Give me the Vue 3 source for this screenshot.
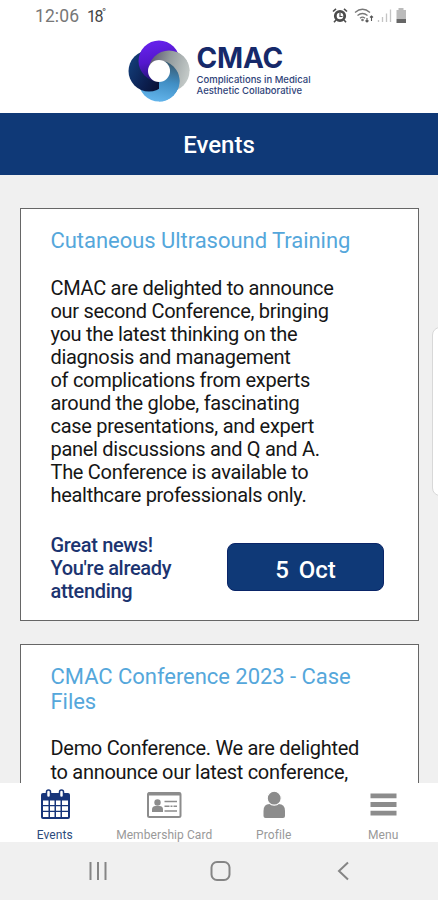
<template>
  <div class="phone">
    <!-- status bar -->
    <div class="status-bar">
      <span class="clock">12:06</span>
      <span class="temperature">18<sup>°</sup></span>
      <svg class="status-icons" width="76" height="18" viewBox="0 0 76 18">
        <!-- alarm -->
        <g fill="none" stroke="#4c4c4c">
          <circle cx="8" cy="9" r="4.7" stroke-width="2.8" />
          <path d="M8 6v3.5h2.5" stroke-width="1.2" />
          <path d="M1 4.5l3-2.7M15 4.5l-3-2.7M4 13l-2 2.3M12 13l2 2.3" stroke-width="1.6" />
        </g>
        <!-- wifi -->
        <g fill="none" stroke="#777" stroke-width="1.3">
          <path d="M23 5.500q7.500-6.500 15 0M25.500 8.500q5-4 10 0M28 11.200q2.500-2 5 0" />
          <path d="M35 11v4M33.500 13.500l1.500 1.500 1.500-1.500M39.500 14v-5M38 10.500l1.500-1.500 1.500 1.500" stroke="#555" stroke-width="1.1" />
          <circle cx="30.500" cy="13" r=".7" />
        </g>
        <!-- signal -->
        <path d="M46.500 15v-2M50.500 15V10M54.500 15V6.500M58.500 15V2.500" stroke="#c4c4c4" stroke-width="1.3" />
        <!-- battery -->
        <path d="M66.500 1h5v2h2.500v9H64.500V3h2z" fill="#bbb" />
        <path d="M64.500 12h9.500v4h-9.500z" fill="#666" />
      </svg>
    </div>

    <!-- logo -->
    <header class="brand">
      <svg class="brand-mark" width="62" height="62" viewBox="0 0 62 62">
        <defs>
          <linearGradient id="purple" x1=".3" y1=".1" x2=".5" y2="1">
            <stop offset="0" stop-color="#6420e8" />
            <stop offset=".45" stop-color="#5317cc" />
            <stop offset="1" stop-color="#1c1668" />
          </linearGradient>
          <linearGradient id="silver" x1="0" y1=".3" x2="1" y2=".6">
            <stop offset="0" stop-color="#5c5870" />
            <stop offset=".45" stop-color="#949c9e" />
            <stop offset="1" stop-color="#c6ccca" />
          </linearGradient>
          <linearGradient id="sky" x1=".6" y1="0" x2=".4" y2="1">
            <stop offset="0" stop-color="#38586e" />
            <stop offset=".5" stop-color="#418fc5" />
            <stop offset="1" stop-color="#63b5ec" />
          </linearGradient>
          <linearGradient id="navy" x1="0" y1=".3" x2="1" y2=".8">
            <stop offset="0" stop-color="#133d78" />
            <stop offset=".5" stop-color="#0c2051" />
            <stop offset="1" stop-color="#060b28" />
          </linearGradient>
          <clipPath id="topHalf"><rect width="62" height="31" /></clipPath>
          <clipPath id="rightHalf"><rect x="31" width="31" height="62" /></clipPath>
        </defs>
        <circle cx="41" cy="31" r="20.500" fill="url(#silver)" />
        <circle cx="31" cy="41" r="20.500" fill="url(#sky)" />
        <circle cx="21" cy="31" r="20.500" fill="url(#navy)" />
        <circle cx="31" cy="21" r="20.500" fill="url(#purple)" />
        <!-- redraw the parts that weave back over -->
        <circle cx="41" cy="31" r="20.500" fill="url(#silver)" clip-path="url(#topHalf)" />
        <circle cx="31" cy="41" r="20.500" fill="url(#sky)" clip-path="url(#rightHalf)" />
        <circle cx="31" cy="31" r="11" fill="#fff" />
      </svg>
      <div class="brand-text">
        <span class="brand-name">CMAC</span>
        <span class="brand-sub">Complications in Medical</span>
        <span class="brand-sub">Aesthetic Collaborative</span>
      </div>
    </header>

    <h1 class="page-title">Events</h1>

    <main class="event-list">
      <article v-for="event in events" :key="event.title" class="event-card">
        <h2 class="event-title">{{ event.title }}</h2>
        <p class="event-text">{{ event.text }}</p>
        <div v-if="event.date" class="event-footer">
          <p class="event-note">{{ event.note }}</p>
          <button class="event-date">{{ event.date }}</button>
        </div>
      </article>
    </main>

    <!-- tab bar -->
    <nav class="tab-bar">
      <a v-for="tab in tabs" :key="tab.key" class="tab" :class="{ active: tab.key === currentTab }">
        <svg v-if="tab.key === 'events'" class="tab-icon" width="36" height="34" viewBox="0 0 36 34">
          <path d="M4 7q0-2 2-2h25q2 0 2 2v22q0 2-2 2H6q-2 0-2-2z" fill="#17357a" />
          <path d="M6 12.500h5.500v4.500H6zM13 12.500h4.500v4.500H13zM19 12.500h4.500v4.500H19zM25 12.500h6v4.500h-6zM6 18.300h5.500v4.500H6zM13 18.300h4.500v4.500H13zM19 18.300h4.500v4.500H19zM25 18.300h6v4.500h-6zM6 24.100h5.500v5H6zM13 24.100h4.500v5H13zM19 24.100h4.500v5H19zM25 24.100h6v5h-6z" fill="#fff" />
          <rect x="9.500" y="2" width="4" height="7.500" rx="2" fill="#fff" stroke="#17357a" stroke-width="1.500" />
          <rect x="22.500" y="2" width="4" height="7.500" rx="2" fill="#fff" stroke="#17357a" stroke-width="1.500" />
        </svg>
        <svg v-else-if="tab.key === 'card'" class="tab-icon" width="36" height="34" viewBox="0 0 36 34">
          <rect x="2" y="5" width="32.500" height="24" rx="1.500" fill="none" stroke="#8c8c8c" stroke-width="2" />
          <path d="M2 4.500h32.500v3H2z" fill="#8c8c8c" />
          <circle cx="11.500" cy="14.500" r="3.200" fill="#8c8c8c" />
          <path d="M6 24v-2.500q0-3.500 3.500-3.500h4q3.500 0 3.500 3.500V24z" fill="#8c8c8c" />
          <path d="M18.500 13.500h12.500M18.500 23h12.500" stroke="#8c8c8c" stroke-width="1.500" />
          <path d="M18.500 18.200h12.500" stroke="#8c8c8c" stroke-width="1.500" stroke-dasharray="5 1 2 1" />
        </svg>
        <svg v-else-if="tab.key === 'profile'" class="tab-icon" width="36" height="34" viewBox="0 0 36 34">
          <path d="M7.500 28v-5q0-7 6-7h9q6.500 0 6.500 7v5q0 2-2 2H9.500q-2 0-2-2z" fill="#8c8c8c" />
          <circle cx="18.200" cy="10.200" r="7" fill="#8c8c8c" stroke="#fff" stroke-width="1.200" />
        </svg>
        <svg v-else class="tab-icon" width="36" height="34" viewBox="0 0 36 34">
          <path d="M5.500 7.800h26M5.500 16.500h26M5.500 25.200h26" stroke="#8c8c8c" stroke-width="4.800" />
        </svg>
        <span class="tab-label">{{ tab.label }}</span>
      </a>
    </nav>

    <!-- android navigation -->
    <div class="system-nav">
      <svg width="24" height="24" viewBox="0 0 24 24">
        <path d="M4.500 3v18M12 3v18M19.500 3v18" />
      </svg>
      <svg width="24" height="24" viewBox="0 0 24 24">
        <rect x="2.500" y="3" width="18" height="18" rx="5.500" />
      </svg>
      <svg width="24" height="24" viewBox="0 0 24 24">
        <path d="M17 3.500L8 12l9 8.500" />
      </svg>
    </div>

    <div class="edge-handle"></div>
  </div>
</template>

<script setup>
import { ref } from 'vue'

const currentTab = ref('events')

const events = [
  {
    title: 'Cutaneous Ultrasound Training',
    text: `CMAC are delighted to announce
our second Conference, bringing
you the latest thinking on the
diagnosis and management
of complications from experts
around the globe, fascinating
case presentations, and expert
panel discussions and Q and A.
The Conference is available to
healthcare professionals only.`,
    note: "Great news!\nYou're already\nattending",
    date: '5 Oct'
  },
  {
    title: 'CMAC Conference 2023 - Case\nFiles',
    text: 'Demo Conference. We are delighted\nto announce our latest conference,'
  }
]

const tabs = [
  { key: 'events', label: 'Events' },
  { key: 'card', label: 'Membership Card' },
  { key: 'profile', label: 'Profile' },
  { key: 'menu', label: 'Menu' }
]
</script>

<style>
body {
  margin: 0;
}
</style>

<style scoped>
.phone {
  position: relative;
  display: flex;
  flex-direction: column;
  width: 438px;
  height: 900px;
  overflow: hidden;
  background: #f0f0f0;
  font-family: Roboto, sans-serif;
  color: #161616;
}

.status-bar {
  display: flex;
  align-items: center;
  flex: none;
  height: 32px;
  box-sizing: border-box;
  padding: 0 30px 0 35px;
  background: #fff;
  color: #777;
}

.clock {
  font-size: 17.5px;
  letter-spacing: 0.1px;
}

.temperature {
  margin-left: 8px;
  font-size: 16px;
  letter-spacing: -1.5px;
  color: #444;
}

.temperature sup {
  font-size: 11px;
  line-height: 0;
}

.status-icons {
  margin-left: auto;
}

.brand {
  display: flex;
  flex: none;
  height: 81px;
  box-sizing: border-box;
  padding: 8px 0 0 127.5px;
  background: #fff;
  color: #16296a;
}

.brand-text {
  display: flex;
  flex-direction: column;
  margin-left: 7px;
  font-family: Inter, sans-serif;
  white-space: nowrap;
}

.brand-name {
  height: 34px;
  font-size: 28px;
  font-weight: 700;
  line-height: 36px;
  letter-spacing: -0.2px;
}

.brand-sub {
  font-size: 9.5px;
  font-weight: 500;
  line-height: 11px;
  color: #2f4379;
}

.page-title {
  flex: none;
  height: 62px;
  margin: 0;
  background: #0f3977;
  color: #fff;
  font-size: 24px;
  font-weight: 500;
  line-height: 64px;
  text-align: center;
}

.event-list {
  display: flex;
  flex: 1;
  flex-direction: column;
  gap: 23px;
  min-height: 0;
  padding: 33px 19px 0 20px;
  overflow: hidden;
}

.event-card {
  flex: none;
  box-sizing: border-box;
  padding: 19px 30px 17px 29.5px;
  border: 1px solid #666;
  background: #fff;
}

.event-title {
  margin: 0;
  color: #55a7db;
  font-size: 22px;
  font-weight: 400;
  line-height: 25px;
  letter-spacing: -0.04px;
  white-space: pre;
}

.event-text {
  margin: 23.5px 0 0;
  font-size: 20px;
  line-height: 23.1px;
  letter-spacing: -0.3px;
  white-space: pre;
}

.event-footer {
  display: flex;
  align-items: center;
  justify-content: space-between;
  margin-top: 26.5px;
}

.event-note {
  margin: 0;
  color: #1c3470;
  font-size: 20px;
  font-weight: 500;
  line-height: 23px;
  letter-spacing: -0.33px;
  white-space: pre;
}

.event-date {
  width: 157px;
  height: 48px;
  margin: -2px 4px 0 0;
  padding: 6px 0 0;
  border: 1px solid #0a2568;
  border-radius: 8px;
  background: #0f3977;
  color: #fff;
  font-family: inherit;
  font-size: 24px;
  font-weight: 500;
  word-spacing: 4px;
}

.tab-bar {
  display: grid;
  grid-template-columns: repeat(4, 1fr);
  flex: none;
  height: 59px;
  background: #fff;
}

.tab {
  display: flex;
  flex-direction: column;
  align-items: center;
  padding-top: 5px;
  color: #999;
}

.tab.active {
  color: #2c4a7c;
}

.tab-label {
  margin-top: 6px;
  font-size: 12px;
  line-height: 14px;
  letter-spacing: 0.08px;
  white-space: nowrap;
}

.system-nav {
  display: flex;
  align-items: center;
  justify-content: space-between;
  flex: none;
  height: 58px;
  box-sizing: border-box;
  padding: 0 83px 0 86px;
}

.system-nav svg {
  fill: none;
  stroke: #858585;
  stroke-width: 2;
}

/* side panel handle floats over the list */
.edge-handle {
  position: absolute;
  top: 327px;
  right: -10px;
  width: 14px;
  height: 167px;
  border: 1px solid #d8d8d8;
  border-radius: 8px;
  background: #fff;
}
</style>
